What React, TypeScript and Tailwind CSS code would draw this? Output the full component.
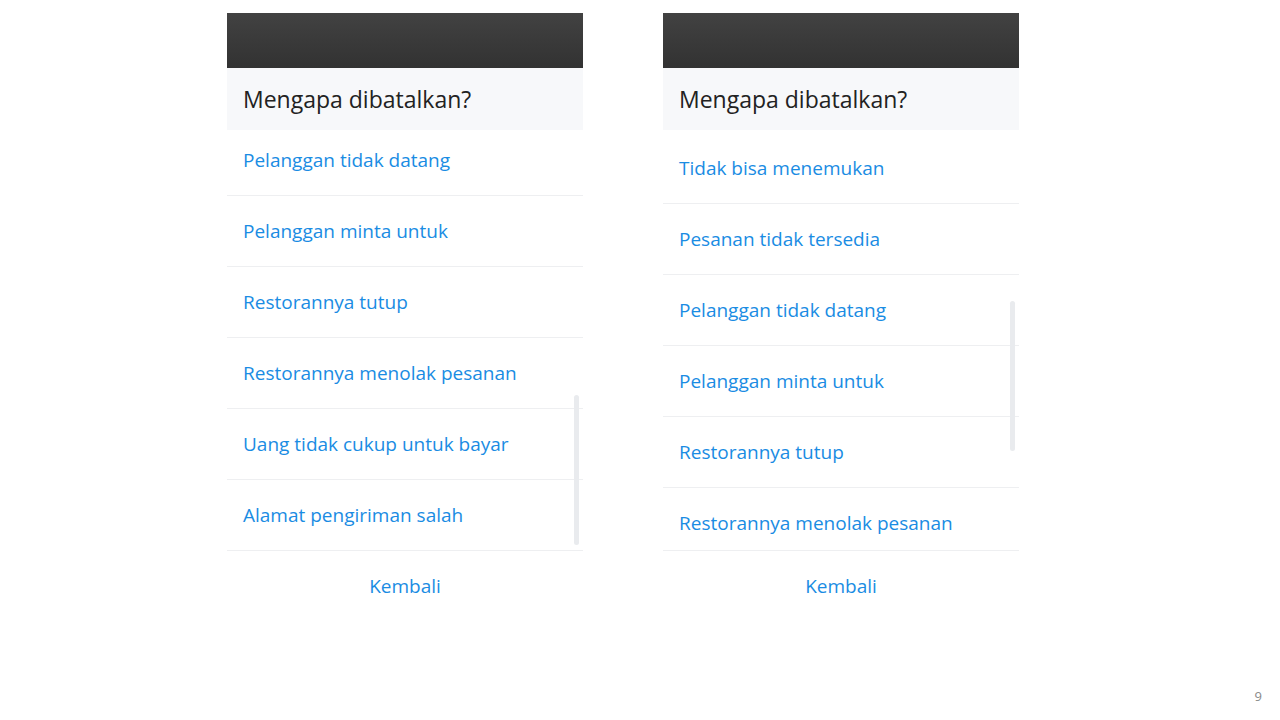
const leftItems = [
  "Pelanggan tidak datang",
  "Pelanggan minta untuk",
  "Restorannya tutup",
  "Restorannya menolak pesanan",
  "Uang tidak cukup untuk bayar",
  "Alamat pengiriman salah",
];

const rightItems = [
  "Tidak bisa menemukan",
  "Pesanan tidak tersedia",
  "Pelanggan tidak datang",
  "Pelanggan minta untuk",
  "Restorannya tutup",
  "Restorannya menolak pesanan",
];

function Panel({ items, offset, thumbTop }: { items: string[]; offset: string; thumbTop: string }) {
  return (
    <div className="flex w-[356px] flex-col bg-white">
      <div className="h-[55px] bg-gradient-to-b from-[#424242] to-[#323232]" />
      <div className="flex h-[62px] items-center bg-[#f7f8fa] px-4">
        <span className="text-[23px] text-[#222]">Mengapa dibatalkan?</span>
      </div>
      <div className="relative h-[420px] overflow-hidden">
        <div className={offset}>
          {items.map((item) => (
            <div key={item} className="flex h-[71px] items-center border-b border-[#eeeff1] px-4">
              <span className="text-[19px] text-[#1a8ce3]">{item}</span>
            </div>
          ))}
        </div>
        <div className={`absolute right-[4px] h-[150px] w-[5px] rounded-full bg-[#e9ebee] ${thumbTop}`} />
      </div>
      <div className="flex h-[72px] items-center justify-center border-t border-[#eeeff1]">
        <span className="text-[19px] text-[#1a8ce3]">Kembali</span>
      </div>
    </div>
  );
}

export default function App() {
  return (
    <div className="relative h-[720px] w-[1280px] bg-white font-['Open_Sans','Noto_Sans',sans-serif]">
      <div className="flex gap-[80px] pl-[227px] pt-[13px]">
        <Panel items={leftItems} offset="-mt-[5px]" thumbTop="top-[265px]" />
        <Panel items={rightItems} offset="mt-[3px]" thumbTop="top-[171px]" />
      </div>
      <span className="absolute bottom-[14px] right-[18px] text-[13px] text-[#8a8a8a]">9</span>
    </div>
  );
}
